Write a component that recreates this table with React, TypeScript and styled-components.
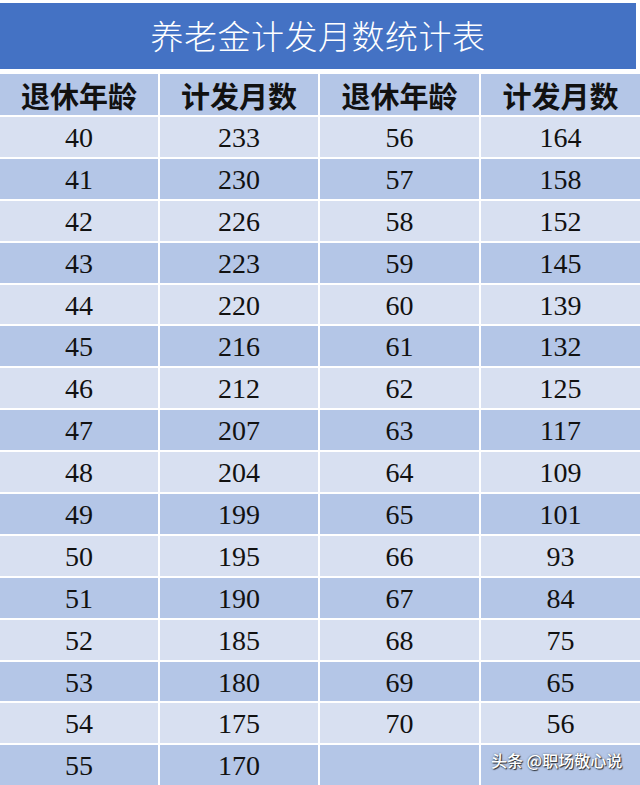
import React from 'react'
import styled, { createGlobalStyle } from 'styled-components'

const Global = createGlobalStyle`
  html, body {
    margin: 0;
    padding: 0;
    background: #ffffff;
  }
`

const left: [number, number][] = [
  [40, 233], [41, 230], [42, 226], [43, 223], [44, 220], [45, 216], [46, 212], [47, 207],
  [48, 204], [49, 199], [50, 195], [51, 190], [52, 185], [53, 180], [54, 175], [55, 170],
]
const right: [number, number][] = [
  [56, 164], [57, 158], [58, 152], [59, 145], [60, 139], [61, 132], [62, 125], [63, 117],
  [64, 109], [65, 101], [66, 93], [67, 84], [68, 75], [69, 65], [70, 56],
]

const Page = styled.div`
  width: 640px;
  height: 785px;
  overflow: hidden;
  padding-top: 3px;
  box-sizing: border-box;
`

const TitleBar = styled.div`
  width: 636px;
  height: 66px;
  background: #4472c4;
  color: #ffffff;
  display: flex;
  align-items: center;
  justify-content: center;
  font-family: "Noto Sans CJK SC", sans-serif;
  font-weight: 300;
  font-size: 33px;
  letter-spacing: 0.5px;
  padding-bottom: 2px;
  box-sizing: border-box;
`

const Table = styled.div`
  margin-top: 5px;
  display: grid;
  grid-template-columns: 158px 158px 159px 1fr;
  grid-auto-rows: 39.9px;
  grid-template-rows: 41px;
  column-gap: 2px;
  row-gap: 2px;
`

const Cell = styled.div<{ $tone: 'head' | 'light' | 'dark' }>`
  display: flex;
  align-items: center;
  justify-content: center;
  background: ${p => (p.$tone === 'light' ? '#d8e0f1' : '#b4c6e7')};
  color: #111111;
  font-family: ${p =>
    p.$tone === 'head' ? '"Noto Sans CJK SC", sans-serif' : '"Liberation Serif", serif'};
  font-size: ${p => (p.$tone === 'head' ? '29px' : '28px')};
  font-weight: ${p => (p.$tone === 'head' ? 600 : 400)};
  padding-top: ${p => (p.$tone === 'head' ? '0' : '2px')};
  box-sizing: border-box;
`

const Mark = styled(Cell)`
  justify-content: flex-start;
  align-items: flex-start;
  padding: 3px 0 0 10px;
  font-family: "Noto Sans CJK SC", sans-serif;
  font-size: 16px;
  font-weight: 500;
  color: #ffffff;
  text-shadow: 1px 1px 1px rgba(0, 0, 0, 0.75), 0 0 2px rgba(0, 0, 0, 0.5);
`

const heads = ['退休年龄', '计发月数', '退休年龄', '计发月数']

export default function App() {
  return (
    <Page>
      <Global />
      <TitleBar>养老金计发月数统计表</TitleBar>
      <Table>
        {heads.map((h, i) => (
          <Cell key={'h' + i} $tone="head">{h}</Cell>
        ))}
        {left.map((row, i) => {
          const tone = i % 2 === 0 ? 'light' : 'dark'
          const r = right[i]
          return (
            <React.Fragment key={i}>
              <Cell $tone={tone}>{row[0]}</Cell>
              <Cell $tone={tone}>{row[1]}</Cell>
              {r ? (
                <>
                  <Cell $tone={tone}>{r[0]}</Cell>
                  <Cell $tone={tone}>{r[1]}</Cell>
                </>
              ) : (
                <>
                  <Cell $tone={tone} />
                  <Mark $tone={tone}>头条 @职场敬心说</Mark>
                </>
              )}
            </React.Fragment>
          )
        })}
      </Table>
    </Page>
  )
}
